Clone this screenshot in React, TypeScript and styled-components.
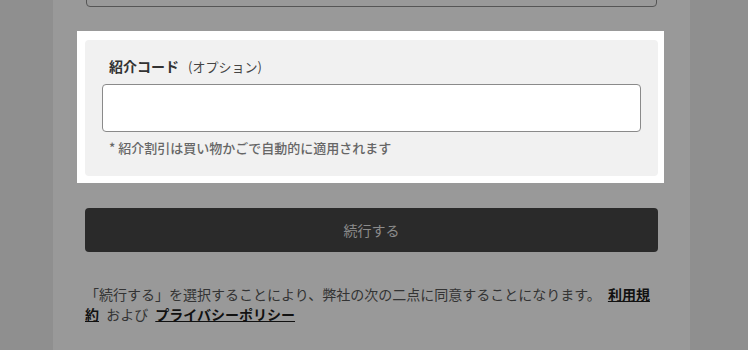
import styled, { createGlobalStyle } from 'styled-components';

const GlobalStyle = createGlobalStyle`
  html, body {
    margin: 0;
    padding: 0;
    background: #8f8f8f;
  }
  body {
    font-family: 'Noto Sans CJK JP', 'Noto Sans', sans-serif;
  }
`;

const Page = styled.div`
  width: 637px;
  min-height: 350px;
  margin-left: 53px;
  padding: 0 32px;
  box-sizing: border-box;
  background: #999999;
  overflow: hidden;
`;

const PrevInput = styled.div`
  height: 40px;
  margin: -33px 1px 0 1px;
  box-sizing: border-box;
  border: 1.5px solid #555555;
  border-radius: 4px;
`;

const Spotlight = styled.div`
  margin: 24px -6px 0 -8px;
  padding: 9px 6px 7px 8px;
  background: #ffffff;
`;

const Panel = styled.div`
  display: flex;
  flex-direction: column;
  padding: 16px 17px 19px;
  background: #f1f1f1;
  border-radius: 4px;
`;

const LabelRow = styled.div`
  display: flex;
  align-items: baseline;
  gap: 9px;
  padding-left: 7px;
  height: 20px;
  line-height: 20px;
`;

const Label = styled.span`
  font-size: 14px;
  font-weight: 700;
  color: #333333;
`;

const Optional = styled.span`
  font-size: 13px;
  color: #444444;
`;

const CodeInput = styled.input`
  height: 48px;
  margin-top: 8px;
  padding: 0 12px;
  box-sizing: border-box;
  border: 1px solid #8a8a8a;
  border-radius: 4px;
  background: #ffffff;
  font: inherit;
  outline: none;
`;

const Note = styled.div`
  margin-top: 6px;
  padding-left: 7px;
  font-size: 13px;
  font-weight: 500;
  line-height: 19px;
  color: #666666;
`;

const ContinueButton = styled.button`
  display: block;
  width: 100%;
  height: 44px;
  margin-top: 25px;
  border: none;
  border-radius: 4px;
  background: #2a2a2a;
  color: #8c8c8c;
  font-family: inherit;
  font-size: 14px;
`;

const Terms = styled.p`
  margin: 32px 0 0;
  font-size: 14px;
  line-height: 20px;
  color: #333333;
`;

const TermsLink = styled.a`
  margin: 0 4px;
  font-weight: 700;
  color: #111111;
  text-decoration: underline;
`;

const App = () => {
  return (
    <>
      <GlobalStyle />
      <Page>
        <PrevInput />
        <Spotlight>
          <Panel>
            <LabelRow>
              <Label>紹介コード</Label>
              <Optional>(オプション)</Optional>
            </LabelRow>
            <CodeInput type="text" />
            <Note>* 紹介割引は買い物かごで自動的に適用されます</Note>
          </Panel>
        </Spotlight>
        <ContinueButton>続行する</ContinueButton>
        <Terms>
          「続行する」を選択することにより、弊社の次の二点に同意することになります。{' '}
          <TermsLink>利用規約</TermsLink> および <TermsLink>プライバシーポリシー</TermsLink>
        </Terms>
      </Page>
    </>
  );
};

export default App;
